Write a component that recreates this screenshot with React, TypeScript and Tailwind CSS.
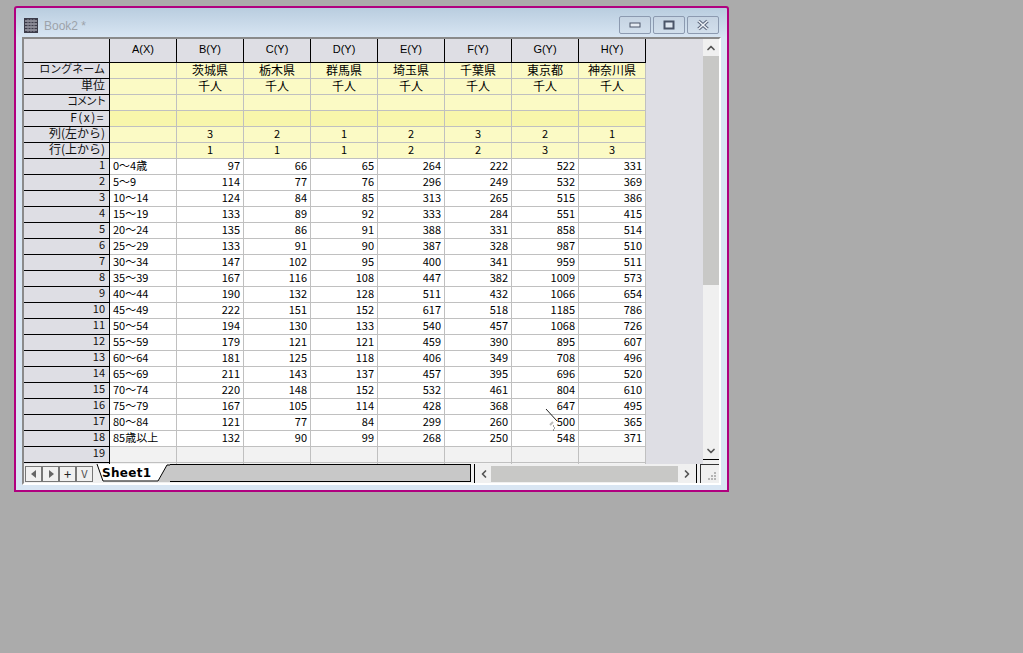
import { ChevronDown, ChevronLeft, ChevronRight, ChevronUp } from "lucide-react";

const font = "font-['Noto_Sans_CJK_JP','Liberation_Sans',sans-serif]";

const columns = ["A(X)", "B(Y)", "C(Y)", "D(Y)", "E(Y)", "F(Y)", "G(Y)", "H(Y)"];

const metaRows = [
  { label: "ロングネーム", labelClass: "text-[11px]", cells: ["", "茨城県", "栃木県", "群馬県", "埼玉県", "千葉県", "東京都", "神奈川県"] },
  { label: "単位", labelClass: "text-[12px]", cells: ["", "千人", "千人", "千人", "千人", "千人", "千人", "千人"] },
  { label: "コメント", labelClass: "text-[11px] tracking-[-1.5px]", cells: ["", "", "", "", "", "", "", ""] },
  { label: "F(x)=", labelClass: "text-[12px] tracking-[1.5px]", cells: ["", "", "", "", "", "", "", ""], strong: true },
  { label: "列(左から)", labelClass: "text-[12px]", cells: ["", "3", "2", "1", "2", "3", "2", "1"] },
  { label: "行(上から)", labelClass: "text-[12px]", cells: ["", "1", "1", "1", "2", "2", "3", "3"] },
];

const rows: (string | number)[][] = [
  ["0～4歳", 97, 66, 65, 264, 222, 522, 331],
  ["5～9", 114, 77, 76, 296, 249, 532, 369],
  ["10～14", 124, 84, 85, 313, 265, 515, 386],
  ["15～19", 133, 89, 92, 333, 284, 551, 415],
  ["20～24", 135, 86, 91, 388, 331, 858, 514],
  ["25～29", 133, 91, 90, 387, 328, 987, 510],
  ["30～34", 147, 102, 95, 400, 341, 959, 511],
  ["35～39", 167, 116, 108, 447, 382, 1009, 573],
  ["40～44", 190, 132, 128, 511, 432, 1066, 654],
  ["45～49", 222, 151, 152, 617, 518, 1185, 786],
  ["50～54", 194, 130, 133, 540, 457, 1068, 726],
  ["55～59", 179, 121, 121, 459, 390, 895, 607],
  ["60～64", 181, 125, 118, 406, 349, 708, 496],
  ["65～69", 211, 143, 137, 457, 395, 696, 520],
  ["70～74", 220, 148, 152, 532, 461, 804, 610],
  ["75～79", 167, 105, 114, 428, 368, 647, 495],
  ["80～84", 121, 77, 84, 299, 260, 500, 365],
  ["85歳以上", 132, 90, 99, 268, 250, 548, 371],
];

function RowHead({ className, children }: { className: string; children?: React.ReactNode }) {
  return (
    <div className={`h-4 w-[86px] shrink-0 border-r border-b border-black bg-[#dedee4] pr-[4px] text-right leading-[11px] text-[#111] ${className}`}>
      {children}
    </div>
  );
}

function WinButton({ children }: { children: React.ReactNode }) {
  return (
    <div className="flex h-[18px] w-[32px] items-center justify-center rounded-[2px] border border-[#8c9ab0] bg-gradient-to-b from-[#c6d4e3] to-[#d2dfec]">
      {children}
    </div>
  );
}

function NavButton({ children }: { children: React.ReactNode }) {
  return (
    <div className="flex h-[16px] w-[17px] items-center justify-center border border-[#777] bg-[#f0f0f0] text-[13px] leading-none text-[#222]">
      {children}
    </div>
  );
}

export default function App() {
  return (
    <div className={`h-[653px] w-[1023px] overflow-hidden bg-[#ababab] pt-[6px] pl-[14px] ${font}`}>
      {/* Workbook window */}
      <div className="relative flex h-[486px] w-[715px] flex-col rounded-t-[3px] border-2 border-[#b0007f] bg-[linear-gradient(#b9cddf,#d9e6f3_30px)] px-[6px] pb-[5px]">
        <div className="flex h-[29px] shrink-0 items-center pt-[6px]">
          <svg width="14" height="15" viewBox="0 0 14 15" className="ml-[2px]">
            <rect width="14" height="15" fill="#3c3c4a" />
            <path d="M1 3h12M1 6h12M1 9h12M1 12h12" stroke="#d0d0d8" strokeWidth="1" />
            <path d="M4 1v13M7 1v13M10 1v13" stroke="#8a8a98" strokeWidth="1" />
          </svg>
          <span className="ml-[6px] font-['Liberation_Sans',sans-serif] text-[12px] text-[#9da3aa]">Book2 *</span>
          <div className="ml-auto flex gap-[2px] pr-[2px] pb-[2px]">
            <WinButton>
              <svg width="12" height="6" viewBox="0 0 12 6">
                <rect x="1" y="1" width="10" height="4" fill="#e6ecf3" stroke="#4b5568" />
              </svg>
            </WinButton>
            <WinButton>
              <svg width="12" height="10" viewBox="0 0 12 10">
                <rect x="1.5" y="1.5" width="9" height="7" fill="#dfe7f0" stroke="#4b5568" strokeWidth="2" />
              </svg>
            </WinButton>
            <WinButton>
              <svg width="14" height="12" viewBox="0 0 14 12">
                <path d="M2.5 2 11.5 10M11.5 2 2.5 10" stroke="#59647a" strokeWidth="3.6" />
                <path d="M2.5 2 11.5 10M11.5 2 2.5 10" stroke="#eef2f7" strokeWidth="1.6" />
              </svg>
            </WinButton>
          </div>
        </div>

        {/* Client area */}
        <div className="flex min-h-0 flex-1 flex-col border-2 border-[#8a8a8a] border-r-white border-b-white bg-[#dedee4] text-black">
          <div className="flex min-h-0 flex-1">
            <div className="w-[622px] shrink-0 overflow-hidden">
              {/* Column headers */}
              <div className="flex">
                <div className="h-6 w-[86px] shrink-0 border-r border-b border-black bg-[#dedee4]" />
                {columns.map((c) => (
                  <div
                    key={c}
                    className="h-6 w-[67px] shrink-0 border-r border-b border-black bg-[#dedee4] text-center font-['Liberation_Sans',sans-serif] text-[11px] leading-[20px]"
                  >
                    {c}
                  </div>
                ))}
              </div>

              {/* Label rows */}
              {metaRows.map((r) => (
                <div key={r.label} className="flex">
                  <RowHead className={r.labelClass}>{r.label}</RowHead>
                  {r.cells.map((v, i) => (
                    <div
                      key={i}
                      className={`h-4 w-[67px] shrink-0 border-r border-b border-[#c0c0c0] text-center ${
                        r.strong ? "bg-[#f8f6ab]" : "bg-[#fbfac5]"
                      } ${/\d/.test(v) ? "text-[11px] leading-[12px]" : "text-[12px] leading-[13px]"}`}
                    >
                      {v}
                    </div>
                  ))}
                </div>
              ))}

              {/* Data */}
              {rows.map((r, idx) => (
                <div key={idx} className="flex">
                  <RowHead className="text-[11px]">{idx + 1}</RowHead>
                  {r.map((v, i) => (
                    <div
                      key={i}
                      className={`h-4 w-[67px] shrink-0 border-r border-b border-[#c0c0c0] bg-white text-[11px] leading-[12px] ${
                        i === 0 ? "pl-[3px] text-left" : "pr-[3px] text-right"
                      }`}
                    >
                      {v}
                    </div>
                  ))}
                </div>
              ))}

              {[19, 20].map((n) => (
                <div key={n} className="flex">
                  <RowHead className="text-[11px]">{n}</RowHead>
                  {columns.map((c) => (
                    <div key={c} className="h-4 w-[67px] shrink-0 border-r border-b border-[#c0c0c0] bg-[#f2f2f2]" />
                  ))}
                </div>
              ))}
            </div>

            <div className="flex-1" />

            {/* Vertical scrollbar */}
            <div className="flex w-4 shrink-0 flex-col bg-[#f0f0f0] text-[#555]">
              <div className="flex h-[17px] items-center justify-center">
                <ChevronUp size={12} strokeWidth={3.5} />
              </div>
              <div className="h-[229px] bg-[#c8c8c6]" />
              <div className="flex-1" />
              <div className="flex h-[17px] items-center justify-center">
                <ChevronDown size={12} strokeWidth={3.5} />
              </div>
              <div className="h-[5px] border-t border-black" />
            </div>
          </div>

          {/* Sheet tabs and horizontal scrollbar */}
          <div className="flex h-[19px] shrink-0 items-center bg-[#f0f0f0]">
            <div className="flex w-[71px] shrink-0 pl-px">
              <NavButton>
                <svg width="6" height="8" viewBox="0 0 6 8"><path d="M5 0v8L0 4z" fill="#666" /></svg>
              </NavButton>
              <NavButton>
                <svg width="6" height="8" viewBox="0 0 6 8"><path d="M1 0v8l5-4z" fill="#666" /></svg>
              </NavButton>
              <NavButton>+</NavButton>
              <NavButton>
                <span className="text-[11px] text-[#555]">V</span>
              </NavButton>
            </div>
            <div className="flex h-full w-[376px] shrink-0 items-stretch">
              <div className="relative flex h-[18px] w-[75px] shrink-0 items-center pl-[7px] font-['DejaVu_Sans',sans-serif] text-[12px] leading-[14px] font-bold tracking-[0.3px] text-black">
                <svg width="75" height="18" viewBox="0 0 75 18" className="absolute top-0 left-0">
                  <path d="M72 1H75V18H63Z" fill="#c8c8c8" />
                  <path d="M2 0H72L63 17H8Z" fill="#fff" />
                  <path d="M2 0 8 17H63L72 1H75" fill="none" stroke="#000" />
                </svg>
                <span className="relative">Sheet1</span>
              </div>
              <div className="mb-px flex-1 border-t border-r border-b border-black bg-[#c8c8c8]" />
            </div>
            <div className="ml-[3px] h-full w-px shrink-0 bg-black" />
            <div className="ml-px flex h-[16px] w-[220px] shrink-0 items-center bg-[#f0f0f0] text-[#555]">
              <div className="flex w-[15px] shrink-0 justify-center">
                <ChevronLeft size={12} strokeWidth={3.5} />
              </div>
              <div className="h-full flex-1 bg-[#c8c8c6]" />
              <div className="flex w-[18px] shrink-0 justify-center">
                <ChevronRight size={12} strokeWidth={3.5} />
              </div>
            </div>
            <div className="h-full w-px shrink-0 bg-black" />
            <div className="ml-[3px] flex h-full flex-1 items-end justify-end border-t border-l border-[#333] bg-[#f0f0f0] p-[3px]">
              <svg width="8" height="8" viewBox="0 0 8 8">
                <path d="M6 0h2v2H6zM3 3h2v2H3zM6 3h2v2H6zM0 6h2v2H0zM3 6h2v2H3zM6 6h2v2H6z" fill="#b5b5b5" />
              </svg>
            </div>
          </div>
        </div>

        {/* Mouse cursor over the sheet */}
        <svg width="14" height="24" viewBox="0 0 14 24" className="absolute top-[400px] left-[529px]">
          <path d="M1 1 12 13" stroke="#222" strokeWidth="1" />
          <path d="M5 17l3-3" stroke="#bbb" strokeWidth="2" />
          <path d="M8 18h1M9 20h1M8 22h1" stroke="#444" strokeWidth="1" />
        </svg>
      </div>
    </div>
  );
}
